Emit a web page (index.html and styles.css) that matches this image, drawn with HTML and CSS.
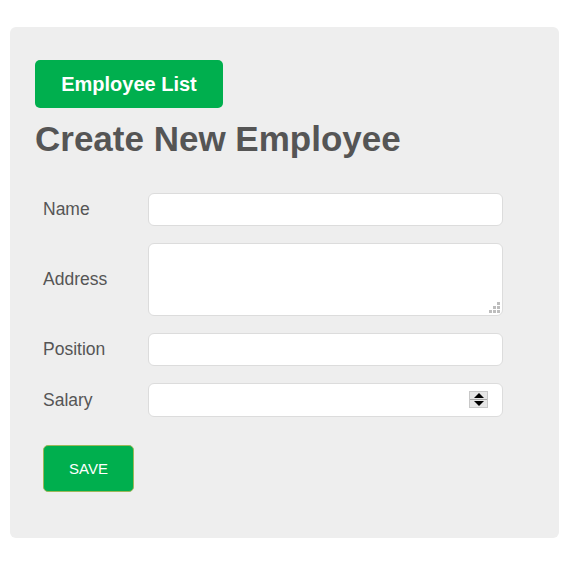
FILE: index.html
```html
<!DOCTYPE html>
<html>
<head>
<meta charset="utf-8">
<link rel="stylesheet" href="styles.css">
</head>
<body>
<div class="panel">
  <button class="list-btn" type="button">Employee List</button>
  <h1 class="title">Create New Employee</h1>
  <form class="form">
    <div class="row">
      <label class="label">Name</label>
      <input class="field" type="text">
    </div>
    <div class="row">
      <label class="label">Address</label>
      <div class="area-wrap">
        <textarea class="field area"></textarea>
        <span class="grip">
          <i class="d d1"></i>
          <i class="d d2"></i><i class="d d3"></i>
          <i class="d d4"></i><i class="d d5"></i><i class="d d6"></i>
        </span>
      </div>
    </div>
    <div class="row">
      <label class="label">Position</label>
      <input class="field" type="text">
    </div>
    <div class="row">
      <label class="label">Salary</label>
      <div class="num-wrap">
        <input class="field num" type="text">
        <span class="spin"><span class="up"></span><span class="sep"></span><span class="down"></span></span>
      </div>
    </div>
    <button class="save" type="button">SAVE</button>
  </form>
</div>
</body>
</html>
```

FILE: styles.css
```css
html, body {
  margin: 0;
  padding: 0;
  background: #fff;
}
body {
  font-family: "Liberation Sans", Arial, sans-serif;
}
.panel {
  box-sizing: border-box;
  margin: 27px 0 0 10px;
  width: 549px;
  height: 511px;
  background: #eeeeee;
  border-radius: 6px;
  padding: 33px 25px 0 25px;
}
.list-btn {
  display: block;
  box-sizing: border-box;
  width: 188px;
  height: 48px;
  border: none;
  border-radius: 5px;
  background: #00af4e;
  color: #fff;
  font-family: "Liberation Sans", Arial, sans-serif;
  font-weight: bold;
  font-size: 20px;
  padding: 0;
  cursor: pointer;
}
.title {
  margin: 11px 0 0 0;
  font-size: 35px;
  line-height: 40px;
  font-weight: bold;
  color: #555555;
}
.form {
  margin: 34px 0 0 8px;
  display: flex;
  flex-direction: column;
  gap: 17px;
}
.row {
  display: flex;
  align-items: center;
}
.label {
  width: 105px;
  flex: none;
  font-size: 17.5px;
  color: #555555;
}
.field {
  box-sizing: border-box;
  display: block;
  width: 355px;
  height: 33px;
  margin: 0;
  border: 1px solid #dcdcdc;
  border-radius: 6px;
  background: #fff;
  font-family: "Liberation Sans", Arial, sans-serif;
  font-size: 16px;
  padding: 4px 8px;
  outline: none;
}
.area-wrap, .num-wrap {
  position: relative;
  width: 355px;
}
.area {
  height: 73px;
  resize: none;
}
.num {
  height: 34px;
}
.grip {
  position: absolute;
  right: 3px;
  bottom: 3px;
  width: 11px;
  height: 11px;
}
.d {
  position: absolute;
  width: 3px;
  height: 3px;
  background: #bdbdbd;
}
.d1 { right: 0; top: 0; }
.d2 { right: 4px; top: 4px; }
.d3 { right: 0; top: 4px; }
.d4 { right: 8px; top: 8px; }
.d5 { right: 4px; top: 8px; }
.d6 { right: 0; top: 8px; }
.spin {
  position: absolute;
  left: 321px;
  top: 8px;
  box-sizing: border-box;
  width: 19px;
  height: 17px;
  background: #e6e6e6;
  border: 1px solid #c8c8c8;
  display: flex;
  flex-direction: column;
  align-items: center;
  justify-content: center;
}
.up, .down {
  width: 0;
  height: 0;
  border-left: 5px solid transparent;
  border-right: 5px solid transparent;
}
.up {
  border-bottom: 5px solid #000;
}
.down {
  border-top: 5px solid #000;
}
.sep {
  width: 17px;
  height: 1px;
  background: #a8a8a8;
  margin: 1px 0;
}
.save {
  margin-top: 11px;
  box-sizing: border-box;
  width: 91px;
  height: 47px;
  border: 1px solid #9cb85a;
  border-radius: 5px;
  background: #00af4e;
  color: #fff;
  font-family: "Liberation Sans", Arial, sans-serif;
  font-size: 15px;
  padding: 0;
  cursor: pointer;
}
```
